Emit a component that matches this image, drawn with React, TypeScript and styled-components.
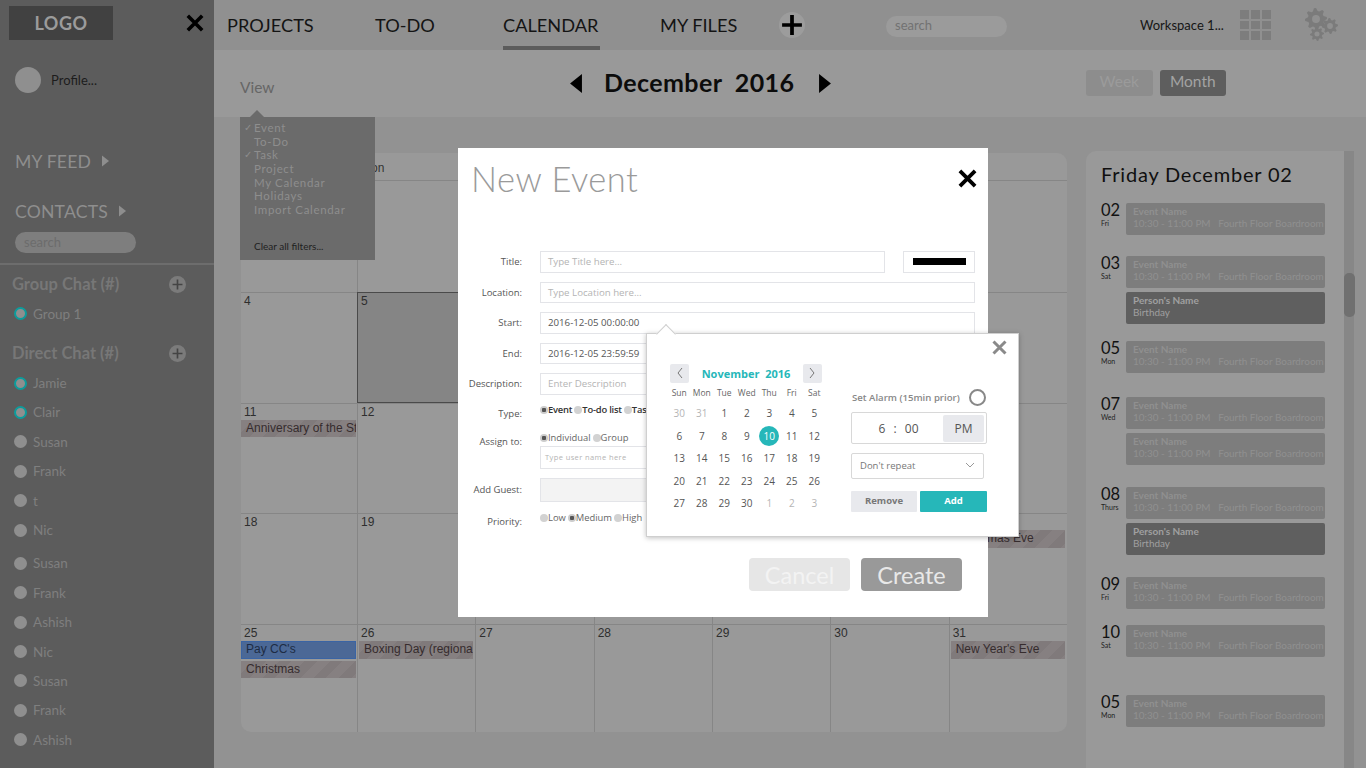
import React from 'react';
import styled, {createGlobalStyle} from 'styled-components';

const GOTHIC = `Lato, "Open Sans", sans-serif`;
const PROXIMA = `"Open Sans", Lato, sans-serif`;
const ARIAL = `"Liberation Sans", Arial, sans-serif`;
const TEAL = '#26b7b9';

const GlobalStyle = createGlobalStyle`
  html, body {
    margin: 0;
    padding: 0;
    height: 100%;
    overflow: hidden;
    background: #929292;
    font-family: ${GOTHIC};
  }
  * { box-sizing: border-box; }
`;

const CrossIcon = ({size, color, weight}: {size: number; color: string; weight: number}) => (
    <svg width={size} height={size} viewBox="0 0 20 20">
        <path d="M2 2 L18 18 M18 2 L2 18" stroke={color} strokeWidth={weight} fill="none" />
    </svg>
);

const PlusIcon = ({size, color, weight}: {size: number; color: string; weight: number}) => (
    <svg width={size} height={size} viewBox="0 0 20 20">
        <path d="M10 1 V19 M1 10 H19" stroke={color} strokeWidth={weight} fill="none" />
    </svg>
);

const Triangle = ({dir, w, h, color}: {dir: 'left' | 'right'; w: number; h: number; color: string}) => (
    <svg width={w} height={h} viewBox="0 0 10 16">
        <path d={dir === 'right' ? 'M0 0 L10 8 L0 16 Z' : 'M10 0 L0 8 L10 16 Z'} fill={color} />
    </svg>
);

const Gear = ({cx, cy, r, color}: {cx: number; cy: number; r: number; color: string}) => {
    const teeth = 8;
    const pts: string[] = [];
    for (let i = 0; i < teeth * 4; i++) {
        const a = (i / (teeth * 4)) * Math.PI * 2;
        const rad = i % 4 < 2 ? r : r * 0.74;
        pts.push(`${(cx + Math.cos(a) * rad).toFixed(2)},${(cy + Math.sin(a) * rad).toFixed(2)}`);
    }
    return (
        <g>
            <polygon points={pts.join(' ')} fill={color} transform={`rotate(-11 ${cx} ${cy})`} />
            <circle cx={cx} cy={cy} r={r * 0.36} fill="#909090" />
        </g>
    );
};

const GearsIcon = () => (
    <svg width="34" height="34" viewBox="0 0 34 34">
        <Gear cx={12} cy={11} r={11} color="#7b7b7b" />
        <Gear cx={26} cy={18} r={8} color="#7b7b7b" />
        <Gear cx={13} cy={26} r={7} color="#7b7b7b" />
    </svg>
);

const Page = styled.div`
  display: flex;
  width: 1366px;
  height: 768px;
  overflow: hidden;
  position: relative;
`;

/* sidebar */

const Sidebar = styled.aside`
  width: 214px;
  flex: none;
  height: 768px;
  background: #5c5c5c;
  display: flex;
  flex-direction: column;
`;
const LogoRow = styled.div`
  display: flex;
  align-items: center;
  justify-content: space-between;
  padding: 6px 10px 0 9px;
`;
const Logo = styled.div`
  width: 104px;
  height: 34px;
  background: #414141;
  color: #9b9b9b;
  font-size: 18px;
  font-weight: 700;
  letter-spacing: 0.5px;
  display: flex;
  align-items: center;
  justify-content: center;
`;
const ProfileRow = styled.div`
  display: flex;
  align-items: center;
  gap: 10px;
  padding-left: 15px;
  margin-top: 27px;
`;
const Avatar = styled.div`
  width: 26px;
  height: 26px;
  border-radius: 50%;
  background: #8f8f8f;
`;
const ProfileName = styled.span`
  font-size: 13px;
  color: #1c1c1c;
`;
const SideHeading = styled.div<{$top: number}>`
  display: flex;
  align-items: center;
  gap: 11px;
  padding-left: 15px;
  height: 24px;
  margin-top: ${p => p.$top}px;
  color: #8e8e8e;
  font-size: 17.6px;
  letter-spacing: 0.2px;
`;
const SideSearch = styled.div`
  width: 121px;
  height: 21px;
  margin: 9px 0 0 15px;
  border-radius: 11px;
  background: #7e7e7e;
  color: #6c6c6c;
  font-size: 13px;
  line-height: 20px;
  padding-left: 9px;
`;
const SideDivider = styled.div`
  height: 2px;
  background: #6d6d6d;
  margin-top: 10px;
`;
const ChatHeading = styled.div<{$top: number}>`
  display: flex;
  align-items: center;
  justify-content: space-between;
  height: 20px;
  margin-top: ${p => p.$top}px;
  padding: 0 28px 0 12px;
  color: #777;
  font-size: 16.5px;
  font-weight: 700;
`;
const RoundPlus = styled.div`
  width: 17px;
  height: 17px;
  border-radius: 50%;
  background: #7b7b7b;
  display: flex;
  align-items: center;
  justify-content: center;
`;
const ContactRow = styled.div<{$top?: number}>`
  display: flex;
  align-items: center;
  gap: 6px;
  height: 29.4px;
  padding-left: 14px;
  margin-top: ${p => p.$top || 0}px;
  color: #7f7f7f;
  font-size: 13.5px;
`;
const Presence = styled.span<{$online?: boolean}>`
  width: 13px;
  height: 13px;
  border-radius: 50%;
  background: #8f8f8f;
  border: ${p => p.$online ? '2px solid #0c9c9c' : 'none'};
`;

/* main column */

const Main = styled.main`
  flex: 1;
  min-width: 0;
  display: flex;
  flex-direction: column;
`;
const TopBar = styled.header`
  height: 50px;
  flex: none;
  background: #909090;
  display: flex;
  align-items: center;
  padding-left: 13px;
  position: relative;
`;
const NavItem = styled.div<{$width: number; $active?: boolean}>`
  width: ${p => p.$width}px;
  height: 50px;
  line-height: 50px;
  font-size: 18.2px;
  color: #141414;
  position: relative;
  white-space: nowrap;
  ${p => p.$active ? `
    &::after {
      content: '';
      position: absolute;
      left: 0;
      bottom: 0;
      width: 97px;
      height: 4px;
      background: #5c5c5c;
    }
  ` : ''}
`;
const AddButton = styled.div`
  width: 26px;
  height: 26px;
  border-radius: 50%;
  background: #9c9c9c;
  display: flex;
  align-items: center;
  justify-content: center;
  margin-left: 6px;
`;
const TopSearch = styled.div`
  width: 121px;
  height: 21px;
  margin-left: 81px;
  margin-top: 2px;
  border-radius: 11px;
  background: #9b9b9b;
  color: #727272;
  font-size: 13px;
  line-height: 19px;
  padding-left: 9px;
`;
const Workspace = styled.div`
  margin-left: 133px;
  width: 100px;
  font-size: 13px;
  color: #161616;
  white-space: nowrap;
`;
const AppGrid = styled.div`
  display: grid;
  grid-template-columns: repeat(3, 9px);
  grid-auto-rows: 8.5px;
  gap: 2px;
  margin-right: 33px;
  span { background: #7d7d7d; }
`;
const SubBar = styled.div`
  height: 67px;
  flex: none;
  background: #999;
  display: flex;
  align-items: center;
  padding: 0 0 0 26px;
  position: relative;
`;
const ViewLabel = styled.div`
  width: 330px;
  margin-top: 6px;
  font-size: 15.5px;
  color: #666;
`;
const MonthNav = styled.div`
  width: 516px;
  display: flex;
  align-items: center;
`;
const MonthTitle = styled.div`
  font-size: 25px;
  font-weight: 700;
  letter-spacing: 0.4px;
  color: #0c0c0c;
  white-space: pre;
  margin: -3px 25px 0 22px;
  width: 190px;
`;
const Toggle = styled.div`
  display: flex;
  gap: 7px;
  margin-top: -1px;
`;
const ToggleButton = styled.div<{$on?: boolean}>`
  width: 66.5px;
  height: 26px;
  border-radius: 3px;
  font-size: 15.5px;
  line-height: 23px;
  text-align: center;
  background: ${p => p.$on ? '#5e5e5e' : '#8d8d8d'};
  color: ${p => p.$on ? '#a3a3a3' : '#9b9b9b'};
`;
const FilterMenu = styled.div`
  position: absolute;
  left: 26px;
  top: 67px;
  width: 135px;
  height: 143px;
  background: #6b6b6b;
  padding: 4px 0 0 14px;
  z-index: 2;
  &::before {
    content: '';
    position: absolute;
    left: 10px;
    top: -7px;
    border-left: 7px solid transparent;
    border-right: 7px solid transparent;
    border-bottom: 7px solid #6b6b6b;
  }
`;
const FilterItem = styled.div<{$checked?: boolean}>`
  height: 13.7px;
  line-height: 13.7px;
  font-size: 11.5px;
  letter-spacing: 0.65px;
  color: #8e8e8e;
  white-space: nowrap;
  position: relative;
  ${p => p.$checked ? `
    &::before {
      content: '✓';
      position: absolute;
      left: -10px;
      font-size: 10px;
    }
  ` : ''}
`;
const ClearFilters = styled.div`
  margin-top: 23px;
  font-size: 10px;
  color: #1f1f1f;
`;

const Body = styled.div`
  flex: 1;
  min-height: 0;
  display: flex;
  background: #929292;
  padding: 36px 0 0 27px;
`;
const Calendar = styled.section`
  width: 826px;
  height: 579px;
  flex: none;
  background: #999;
  border-radius: 10px;
  display: flex;
  flex-direction: column;
  overflow: hidden;
`;
const WeekHead = styled.div`
  height: 28px;
  flex: none;
  display: grid;
  grid-template-columns: 116px repeat(6, 1fr);
  border-bottom: 1px solid #868686;
  font: 12px ${ARIAL};
  color: #333;
  line-height: 30px;
  span { padding-left: 4px; }
`;
const DayGrid = styled.div`
  flex: 1;
  display: grid;
  grid-template-columns: 116px repeat(6, 1fr);
  grid-template-rows: repeat(4, 110.75px) 1fr;
`;
const DayCell = styled.div<{$selected?: boolean; $first?: boolean; $top?: boolean}>`
  border-left: ${p => p.$first ? 'none' : '1px solid #868686'};
  border-top: ${p => p.$top ? 'none' : '1px solid #868686'};
  background: ${p => p.$selected ? '#858585' : 'transparent'};
  ${p => p.$selected ? 'outline: 1px solid #4a4a4a; outline-offset: -1px;' : ''}
  padding-top: 1px;
  min-width: 0;
  overflow: hidden;
`;
const DayNumber = styled.div`
  font: 12px/14px ${ARIAL};
  color: #2e2e2e;
  padding-left: 3px;
  height: 15px;
`;
const CalEvent = styled.div<{$kind?: 'holiday' | 'bill'; $first?: boolean}>`
  height: 17.5px;
  margin: 0 ${p => p.$first ? '1px' : '2px'} 2px ${p => p.$first ? '0' : '1px'};
  padding-left: 5px;
  font: 12px/16px ${ARIAL};
  white-space: nowrap;
  overflow: hidden;
  color: ${p => p.$kind === 'bill' ? '#1d2c44' : '#362c2e'};
  background: ${p => p.$kind === 'bill'
    ? '#4b6896'
    : 'repeating-linear-gradient(135deg, #868081 0 9px, #807a7b 9px 18px)'};
  ${p => p.$kind === 'bill' ? 'border: 1px solid #3a64a4; line-height: 14px; padding-left: 4px;' : ''}
`;

const Agenda = styled.section`
  width: 258px;
  height: 620px;
  flex: none;
  margin: -2px 0 0 19px;
  background: #999;
  border-radius: 10px 0 0 0;
  padding: 10px 0 0 15px;
  position: relative;
`;
const AgendaTrack = styled.div`
  position: absolute;
  right: -10px;
  top: 0;
  bottom: 0;
  width: 10px;
  background: #878787;
`;
const AgendaThumb = styled.div`
  position: absolute;
  right: -11px;
  top: 122px;
  width: 11px;
  height: 44px;
  border-radius: 5px;
  background: #707070;
`;
const AgendaTitle = styled.h2`
  margin: 0;
  font-size: 20px;
  font-weight: 400;
  letter-spacing: 0.8px;
  line-height: 26px;
  padding-bottom: 2px;
  color: #101010;
  white-space: nowrap;
`;
const DayGroup = styled.div<{$top: number}>`
  display: flex;
  margin-top: ${p => p.$top}px;
`;
const DayTag = styled.div`
  width: 25px;
  flex: none;
  color: #121212;
  font-size: 16.5px;
  line-height: 15px;
  span {
    display: block;
    font-size: 7px;
    line-height: 8px;
    margin-top: 1px;
    color: #222;
  }
`;
const DayEvents = styled.div`
  display: flex;
  flex-direction: column;
  gap: 4px;
`;
const EventCard = styled.div<{$person?: boolean}>`
  width: 199px;
  height: 32px;
  border-radius: 2px;
  padding: 2px 0 0 7px;
  background: ${p => p.$person ? '#5f5f5f' : '#7d7d7d'};
  color: ${p => p.$person ? '#a0a0a0' : '#909090'};
  font-size: 9.95px;
  line-height: 12px;
  white-space: pre;
  overflow: hidden;
  b { display: block; font-weight: 700; font-size: 10px; }
`;

/* modal */

const Modal = styled.div`
  position: absolute;
  left: 458px;
  top: 148px;
  width: 530px;
  height: 469px;
  background: #fff;
  z-index: 5;
  font-family: ${PROXIMA};
`;
const ModalTitle = styled.h1`
  margin: 0;
  height: 103px;
  padding: 9px 0 0 13px;
  font-family: ${GOTHIC};
  font-size: 34.5px;
  font-weight: 300;
  line-height: 44px;
  letter-spacing: 0.5px;
  color: #9a9a9a;
`;
const ModalClose = styled.div`
  position: absolute;
  right: 11px;
  top: 21px;
`;
const FormRow = styled.div<{$h: number; $after?: number}>`
  display: flex;
  height: ${p => p.$h}px;
  margin-bottom: ${p => p.$after || 0}px;
  align-items: center;
  padding-right: 13px;
`;
const FormLabel = styled.label<{$drop?: number}>`
  width: 64px;
  flex: none;
  margin-right: 18px;
  text-align: right;
  font-size: 9.5px;
  color: #555;
  white-space: nowrap;
  ${p => p.$drop ? `align-self: flex-start; margin-top: ${p.$drop}px;` : ''}
`;
const Field = styled.div<{$fill?: boolean}>`
  flex: 1;
  height: 100%;
  border: 1px solid #e3e4e8;
  background: ${p => p.$fill ? '#f3f3f3' : '#fff'};
  font-size: 9.7px;
  line-height: 19px;
  padding-left: 7px;
  color: #555;
`;
const Hint = styled.span<{$small?: boolean}>`
  color: #b4b4b4;
  ${p => p.$small ? 'font-size: 7.5px; letter-spacing: 0.4px; margin-left: -3px;' : ''}
`;
const ColorField = styled.div`
  width: 72px;
  height: 100%;
  flex: none;
  margin-left: 18px;
  border: 1px solid #e3e4e8;
  display: flex;
  align-items: center;
  justify-content: center;
  span {
    width: 53px;
    height: 7px;
    background: #000;
  }
`;
const RadioGroup = styled.div`
  display: flex;
  align-items: center;
  font-size: 9.4px;
  line-height: 14px;
  white-space: nowrap;
  overflow: hidden;
  align-self: flex-start;
`;
const RadioOption = styled.span<{$checked?: boolean; $strong?: boolean}>`
  display: inline-flex;
  align-items: center;
  gap: 0;
  margin-right: 2px;
  color: ${p => p.$strong ? '#333' : '#666'};
  font-weight: ${p => p.$strong ? 600 : 400};
  letter-spacing: ${p => p.$strong ? '-0.2px' : '0'};
  &::before {
    content: '';
    width: 8px;
    height: 8px;
    border-radius: 50%;
    background: ${p => p.$checked ? 'radial-gradient(circle, #555 0 2px, #ccc 2.5px)' : '#d2d2d2'};
  }
`;
const ModalActions = styled.div`
  display: flex;
  justify-content: flex-end;
  gap: 11px;
  padding-right: 26px;
  margin-top: 24px;
`;
const ActionButton = styled.div<{$primary?: boolean}>`
  width: 101px;
  height: 33px;
  border-radius: 4px;
  font-family: ${GOTHIC};
  font-size: 23.5px;
  line-height: 34px;
  text-align: center;
  color: ${p => p.$primary ? '#e8e8e8' : '#f3f3f3'};
  background: ${p => p.$primary ? '#999' : '#e6e6e6'};
`;

/* date popover */

const Popover = styled.div`
  position: absolute;
  left: 188px;
  top: 185px;
  width: 373px;
  height: 204px;
  background: #fff;
  border: 1px solid #cfcfcf;
  box-shadow: 0 1px 5px rgba(0, 0, 0, 0.25);
  display: flex;
  padding: 29px 0 0 21px;
  &::before {
    content: '';
    position: absolute;
    left: 12px;
    top: -7px;
    width: 13px;
    height: 13px;
    background: #fff;
    border-left: 1px solid #cfcfcf;
    border-top: 1px solid #cfcfcf;
    transform: rotate(45deg);
  }
`;
const PopoverClose = styled.div`
  position: absolute;
  right: 11px;
  top: 4px;
`;
const PickerColumn = styled.div`
  width: 158px;
  flex: none;
`;
const PickerHead = styled.div`
  height: 20px;
  display: flex;
  align-items: center;
  justify-content: space-between;
  padding: 0 4px 0 2px;
`;
const PickerArrow = styled.div`
  width: 19px;
  height: 19px;
  border-radius: 2px;
  background: #e8e9ed;
  display: flex;
  align-items: center;
  justify-content: center;
`;
const PickerMonth = styled.div`
  font-size: 11px;
  font-weight: 700;
  color: ${TEAL};
  white-space: pre;
`;
const WeekRow = styled.div`
  display: grid;
  grid-template-columns: repeat(7, 22.5px);
  height: 18px;
  line-height: 18px;
  margin-top: 1px;
  font-size: 8.5px;
  color: #666;
  text-align: center;
`;
const Dates = styled.div`
  display: grid;
  grid-template-columns: repeat(7, 22.5px);
  grid-auto-rows: 22.5px;
`;
const DateCell = styled.div<{$muted?: boolean; $today?: boolean}>`
  display: flex;
  align-items: center;
  justify-content: center;
  font-size: 10px;
  color: ${p => p.$today ? '#fff' : p.$muted ? '#b5b5b5' : '#555'};
  ${p => p.$today ? `
    span {
      width: 20px;
      height: 20px;
      line-height: 20px;
      border-radius: 50%;
      background: ${TEAL};
      text-align: center;
    }
  ` : ''}
`;
const AlarmColumn = styled.div`
  width: 136px;
  flex: none;
  margin-left: 25px;
  padding-top: 26px;
`;
const AlarmRow = styled.div`
  height: 16px;
  display: flex;
  align-items: center;
  justify-content: space-between;
  padding: 0 1px 0 1px;
  font-size: 9.6px;
  font-weight: 600;
  color: #888;
  white-space: nowrap;
  &::after {
    content: '';
    width: 13px;
    height: 13px;
    border-radius: 50%;
    border: 2px solid #888;
  }
`;
const TimeBox = styled.div`
  height: 32px;
  margin-top: 7px;
  border: 1px solid #d8d8d8;
  border-radius: 2px;
  display: flex;
  align-items: center;
  padding: 2px;
  font-size: 12px;
  color: #555;
`;
const TimeValue = styled.div`
  flex: 1;
  text-align: center;
  white-space: pre;
  word-spacing: 1px;
`;
const Meridiem = styled.div`
  width: 41px;
  height: 27px;
  line-height: 27px;
  text-align: center;
  border-radius: 2px;
  background: #e8e9ed;
`;
const RepeatSelect = styled.div`
  width: 133px;
  height: 26px;
  margin-top: 9px;
  border: 1px solid #d8d8d8;
  border-radius: 2px;
  display: flex;
  align-items: center;
  justify-content: space-between;
  padding: 0 8px 2px;
  font-size: 9.5px;
  color: #777;
`;
const PickerActions = styled.div`
  display: flex;
  justify-content: space-between;
  margin-top: 12px;
`;
const PickerButton = styled.div<{$primary?: boolean}>`
  width: ${p => p.$primary ? 67 : 66}px;
  height: 21px;
  line-height: 20px;
  text-align: center;
  border-radius: 1px;
  font-size: 9.5px;
  font-weight: 700;
  background: ${p => p.$primary ? TEAL : '#e8e9ed'};
  color: ${p => p.$primary ? '#fff' : '#777'};
`;

const CONTACTS_A = ['Susan', 'Frank', 't', 'Nic'];
const CONTACTS_B = ['Susan', 'Frank', 'Ashish', 'Nic', 'Susan', 'Frank', 'Ashish'];
const FILTERS = [
    {label: 'Event', checked: true},
    {label: 'To-Do'},
    {label: 'Task', checked: true},
    {label: 'Project'},
    {label: 'My Calendar'},
    {label: 'Holidays'},
    {label: 'Import Calendar'}
];

type CalItem = {label: string; kind?: 'holiday' | 'bill'};
type CalDay = {day: number; selected?: boolean; items?: CalItem[]};

const holiday = (label: string): CalItem => ({label, kind: 'holiday'});

const CAL_DAYS: CalDay[] = [
    {day: 27}, {day: 28}, {day: 29}, {day: 30}, {day: 1}, {day: 2}, {day: 3},
    {day: 4}, {day: 5, selected: true}, {day: 6}, {day: 7}, {day: 8}, {day: 9}, {day: 10},
    {day: 11, items: [holiday('Anniversary of the Statute of Westminster')]}, {day: 12}, {day: 13}, {day: 14}, {day: 15}, {day: 16}, {day: 17},
    {day: 18}, {day: 19}, {day: 20}, {day: 21}, {day: 22}, {day: 23}, {day: 24, items: [holiday('Christmas Eve')]},
    {day: 25, items: [{label: "Pay CC's", kind: 'bill'}, holiday('Christmas')]},
    {day: 26, items: [holiday('Boxing Day (regional holiday)')]},
    {day: 27}, {day: 28}, {day: 29}, {day: 30},
    {day: 31, items: [holiday("New Year's Eve")]}
];

const EVENT_LINE = '10:30 - 11:00 PM   Fourth Floor Boardroom';

const AGENDA = [
    {num: '02', dow: 'Fri', top: 14, birthday: false, double: false},
    {num: '03', dow: 'Sat', top: 21, birthday: true, double: false},
    {num: '05', dow: 'Mon', top: 17, birthday: false, double: false},
    {num: '07', dow: 'Wed', top: 24, birthday: false, double: true},
    {num: '08', dow: 'Thurs', top: 22, birthday: true, double: false},
    {num: '09', dow: 'Fri', top: 22, birthday: false, double: false},
    {num: '10', dow: 'Sat', top: 16, birthday: false, double: false},
    {num: '05', dow: 'Mon', top: 38, birthday: false, double: false}
];

const PICKER_DATES = [
    [30, 31, 1, 2, 3, 4, 5],
    [6, 7, 8, 9, 10, 11, 12],
    [13, 14, 15, 16, 17, 18, 19],
    [20, 21, 22, 23, 24, 25, 26],
    [27, 28, 29, 30, 1, 2, 3]
];

const Chevron = ({d, color = '#777', w = 8, h = 12}: {d: string; color?: string; w?: number; h?: number}) => (
    <svg width={w} height={h} viewBox="0 0 8 12">
        <path d={d} stroke={color} strokeWidth="1" fill="none" />
    </svg>
);

export default function App() {
    return (
        <Page>
            <GlobalStyle />

            <Sidebar>
                <LogoRow>
                    <Logo>LOGO</Logo>
                    <CrossIcon size={18} color="#000" weight={4} />
                </LogoRow>
                <ProfileRow>
                    <Avatar />
                    <ProfileName>Profile...</ProfileName>
                </ProfileRow>
                <SideHeading $top={56}>
                    MY FEED
                    <Triangle dir="right" w={7} h={12} color="#8e8e8e" />
                </SideHeading>
                <SideHeading $top={26}>
                    CONTACTS
                    <Triangle dir="right" w={7} h={12} color="#8e8e8e" />
                </SideHeading>
                <SideSearch>search</SideSearch>
                <SideDivider />
                <ChatHeading $top={9}>
                    Group Chat (#)
                    <RoundPlus><PlusIcon size={11} color="#444" weight={3} /></RoundPlus>
                </ChatHeading>
                <ContactRow $top={5}><Presence $online />Group 1</ContactRow>
                <ChatHeading $top={15}>
                    Direct Chat (#)
                    <RoundPlus><PlusIcon size={11} color="#444" weight={3} /></RoundPlus>
                </ChatHeading>
                <ContactRow $top={5}><Presence $online />Jamie</ContactRow>
                <ContactRow><Presence $online />Clair</ContactRow>
                {CONTACTS_A.map((name, key) => (
                    <ContactRow key={key}><Presence />{name}</ContactRow>
                ))}
                {CONTACTS_B.map((name, key) => (
                    <ContactRow key={key} $top={key === 0 ? 4 : 0}><Presence />{name}</ContactRow>
                ))}
            </Sidebar>

            <Main>
                <TopBar>
                    <NavItem $width={148}>PROJECTS</NavItem>
                    <NavItem $width={128}>TO-DO</NavItem>
                    <NavItem $width={157} $active>CALENDAR</NavItem>
                    <NavItem $width={113}>MY FILES</NavItem>
                    <AddButton><PlusIcon size={22} color="#000" weight={3.4} /></AddButton>
                    <TopSearch>search</TopSearch>
                    <Workspace>Workspace 1...</Workspace>
                    <AppGrid>
                        {Array.from({length: 9}).map((_, key) => <span key={key} />)}
                    </AppGrid>
                    <GearsIcon />
                </TopBar>

                <SubBar>
                    <ViewLabel>View</ViewLabel>
                    <MonthNav>
                        <Triangle dir="left" w={12} h={19} color="#000" />
                        <MonthTitle>December  2016</MonthTitle>
                        <Triangle dir="right" w={12} h={19} color="#000" />
                    </MonthNav>
                    <Toggle>
                        <ToggleButton>Week</ToggleButton>
                        <ToggleButton $on>Month</ToggleButton>
                    </Toggle>
                    <FilterMenu>
                        {FILTERS.map((item, key) => (
                            <FilterItem key={key} $checked={item.checked}>{item.label}</FilterItem>
                        ))}
                        <ClearFilters>Clear all filters...</ClearFilters>
                    </FilterMenu>
                </SubBar>

                <Body>
                    <Calendar>
                        <WeekHead>
                            {['Sun', 'Mon', 'Tue', 'Wed', 'Thu', 'Fri', 'Sat'].map(day => <span key={day}>{day}</span>)}
                        </WeekHead>
                        <DayGrid>
                            {CAL_DAYS.map((cell, key) => (
                                <DayCell key={key} $selected={cell.selected} $first={key % 7 === 0} $top={key < 7}>
                                    <DayNumber>{cell.day}</DayNumber>
                                    {cell.items && cell.items.map((item, i) => (
                                        <CalEvent key={i} $kind={item.kind} $first={key % 7 === 0}>{item.label}</CalEvent>
                                    ))}
                                </DayCell>
                            ))}
                        </DayGrid>
                    </Calendar>

                    <Agenda>
                        <AgendaTrack />
                        <AgendaThumb />
                        <AgendaTitle>Friday December 02</AgendaTitle>
                        {AGENDA.map((group, key) => (
                            <DayGroup key={key} $top={group.top}>
                                <DayTag>{group.num}<span>{group.dow}</span></DayTag>
                                <DayEvents>
                                    <EventCard><b>Event Name</b>{EVENT_LINE}</EventCard>
                                    {group.double && <EventCard><b>Event Name</b>{EVENT_LINE}</EventCard>}
                                    {group.birthday && <EventCard $person><b>Person's Name</b>Birthday</EventCard>}
                                </DayEvents>
                            </DayGroup>
                        ))}
                    </Agenda>
                </Body>
            </Main>

            <Modal>
                <ModalTitle>New Event</ModalTitle>
                <ModalClose><CrossIcon size={19} color="#000" weight={4} /></ModalClose>

                <FormRow $h={21.5} $after={9}>
                    <FormLabel>Title:</FormLabel>
                    <Field><Hint>Type Title here...</Hint></Field>
                    <ColorField><span /></ColorField>
                </FormRow>
                <FormRow $h={21.5} $after={9}>
                    <FormLabel>Location:</FormLabel>
                    <Field><Hint>Type Location here...</Hint></Field>
                </FormRow>
                <FormRow $h={21.5} $after={9}>
                    <FormLabel>Start:</FormLabel>
                    <Field>2016-12-05 00:00:00</Field>
                </FormRow>
                <FormRow $h={21.5} $after={9}>
                    <FormLabel>End:</FormLabel>
                    <Field>2016-12-05 23:59:59</Field>
                </FormRow>
                <FormRow $h={21.5} $after={8}>
                    <FormLabel>Description:</FormLabel>
                    <Field><Hint>Enter Description</Hint></Field>
                </FormRow>
                <FormRow $h={28}>
                    <FormLabel $drop={4}>Type:</FormLabel>
                    <RadioGroup>
                        <RadioOption $checked $strong>Event</RadioOption>
                        <RadioOption $strong>To-do list</RadioOption>
                        <RadioOption $strong>Task</RadioOption>
                    </RadioGroup>
                </FormRow>
                <FormRow $h={15}>
                    <FormLabel $drop={4}>Assign to:</FormLabel>
                    <RadioGroup>
                        <RadioOption $checked>Individual</RadioOption>
                        <RadioOption>Group</RadioOption>
                    </RadioGroup>
                </FormRow>
                <FormRow $h={23} $after={9}>
                    <FormLabel />
                    <Field><Hint $small>Type  user  name  here</Hint></Field>
                </FormRow>
                <FormRow $h={24} $after={9}>
                    <FormLabel>Add Guest:</FormLabel>
                    <Field $fill />
                </FormRow>
                <FormRow $h={23}>
                    <FormLabel $drop={4}>Priority:</FormLabel>
                    <RadioGroup>
                        <RadioOption>Low</RadioOption>
                        <RadioOption $checked>Medium</RadioOption>
                        <RadioOption>High</RadioOption>
                    </RadioGroup>
                </FormRow>
                <ModalActions>
                    <ActionButton>Cancel</ActionButton>
                    <ActionButton $primary>Create</ActionButton>
                </ModalActions>

                <Popover>
                    <PopoverClose><CrossIcon size={15} color="#8a8a8a" weight={4} /></PopoverClose>
                    <PickerColumn>
                        <PickerHead>
                            <PickerArrow><Chevron d="M6 1 L2 6 L6 11" /></PickerArrow>
                            <PickerMonth>November  2016</PickerMonth>
                            <PickerArrow><Chevron d="M2 1 L6 6 L2 11" /></PickerArrow>
                        </PickerHead>
                        <WeekRow>
                            {['Sun', 'Mon', 'Tue', 'Wed', 'Thu', 'Fri', 'Sat'].map(day => <span key={day}>{day}</span>)}
                        </WeekRow>
                        <Dates>
                            {PICKER_DATES.map((week, row) => week.map((date, col) => {
                                const muted = (row === 0 && date > 20) || (row === 4 && date < 10);
                                const today = row === 1 && date === 10;
                                return (
                                    <DateCell key={`${row}-${col}`} $muted={muted} $today={today}>
                                        <span>{date}</span>
                                    </DateCell>
                                );
                            }))}
                        </Dates>
                    </PickerColumn>
                    <AlarmColumn>
                        <AlarmRow>Set Alarm (15min prior)</AlarmRow>
                        <TimeBox>
                            <TimeValue>6  :  00</TimeValue>
                            <Meridiem>PM</Meridiem>
                        </TimeBox>
                        <RepeatSelect>
                            Don't repeat
                            <svg width="10" height="6" viewBox="0 0 10 6">
                                <path d="M1 1 L5 5 L9 1" stroke="#999" strokeWidth="1" fill="none" />
                            </svg>
                        </RepeatSelect>
                        <PickerActions>
                            <PickerButton>Remove</PickerButton>
                            <PickerButton $primary>Add</PickerButton>
                        </PickerActions>
                    </AlarmColumn>
                </Popover>
            </Modal>
        </Page>
    );
}
